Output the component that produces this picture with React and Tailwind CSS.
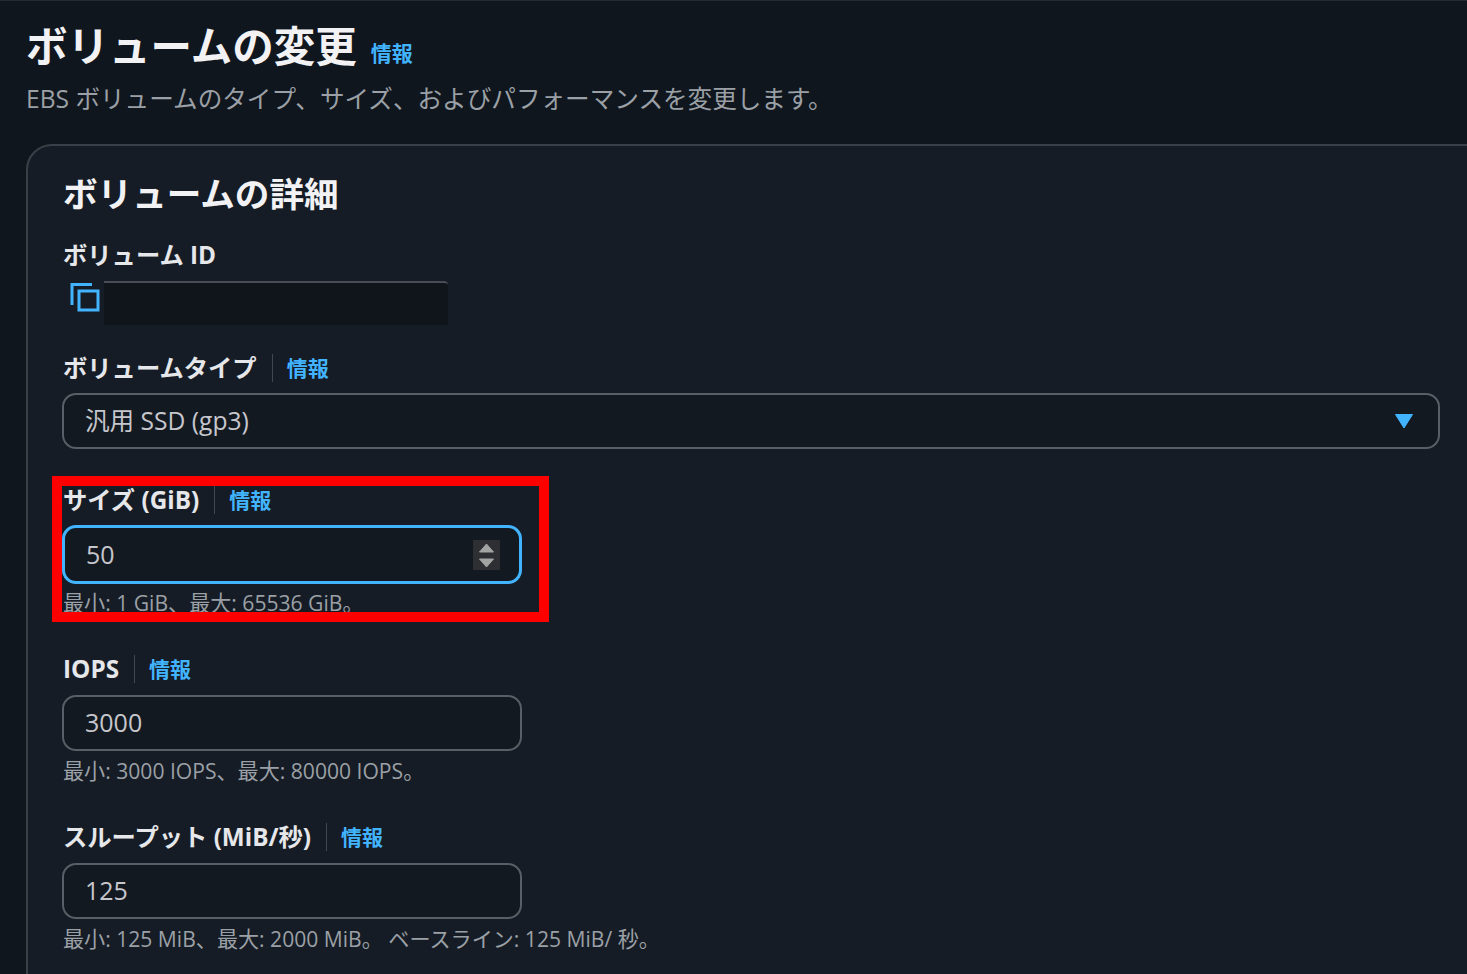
import React from "react";

const font = { fontFamily: '"Open Sans", "Noto Sans CJK JP", sans-serif' };

const Info = () => (
  <a className="text-[21px] leading-[28px] font-bold text-[#42b4ff]">情報</a>
);

// label with a divider and info link
const Label = ({ children, mt }) => (
  <div className={`flex items-center h-[30px] ${mt}`}>
    <span className="text-[24.3px] leading-[30px] font-bold text-[#e6e7ea]">{children}</span>
    <span className="w-px h-[28px] bg-[#424650] ml-[15px] mr-[14px]" />
    <Info />
  </div>
);

const Hint = ({ children, className = "" }) => (
  <div className={`text-[21.1px] leading-[28px] text-[#9ba0a6] ${className}`}>{children}</div>
);

const NumberBox = ({ value, focused, children }) => (
  <div
    className={`flex items-center justify-between w-[460px] pl-[21px] pr-[20px] rounded-[14px] bg-[#131920] text-[25px] text-[#c6c6cd] ${
      focused
        ? "h-[59px] mt-[10px] -ml-px border-[3px] border-[#42b4ff]"
        : "h-[56px] mt-[11px] -ml-px border-2 border-[#5a5e66]"
    }`}
  >
    <span>{value}</span>
    {children}
  </div>
);

const App = () => {
  return (
    <div className="relative w-[1467px] h-[974px] overflow-hidden bg-[#10161e] border-t border-[#232a33]" style={font}>
      <div className="pl-[26px] pt-[20px]">
        <div className="flex items-end h-[50px]">
          <h1 className="text-[41.5px] leading-[50px] font-bold text-[#f2f2f4]">ボリュームの変更</h1>
          <span className="ml-[14px] -translate-y-[4px]">
            <Info />
          </span>
        </div>
        <p className="mt-[12px] text-[24.6px] leading-[32px] text-[#9ba0a6]">
          EBS ボリュームのタイプ、サイズ、およびパフォーマンスを変更します。
        </p>

        <div className="mt-[29px] w-[1500px] h-[900px] pl-[35px] pt-[24px] bg-[#151c25] border-2 border-[#3a3f48] rounded-[26px]">
          <h2 className="text-[34.6px] leading-[48px] font-bold text-[#f2f2f4]">ボリュームの詳細</h2>

          <div className="mt-[22px] text-[24.3px] leading-[30px] font-bold text-[#e6e7ea]">ボリューム ID</div>
          <div className="flex items-start mt-[11px] h-[44px]">
            <svg width="32" height="32" viewBox="0 0 32 32" fill="none" stroke="#42b4ff" strokeWidth="3" className="ml-[7px] shrink-0">
              <path d="M2 24V3.5H22" />
              <rect x="9" y="10" width="19" height="19" />
            </svg>
            <div className="ml-[2px] w-[344px] h-[44px] bg-[#10151b] border-t-2 border-[#4a4d55] rounded-tr-[4px]" />
          </div>

          <Label mt="mt-[28px]">ボリュームタイプ</Label>
          <div className="flex items-center justify-between w-[1378px] h-[56px] mt-[10px] -ml-px pl-[21px] pr-[24px] rounded-[14px] bg-[#131920] border-2 border-[#5a5e66] text-[24.6px] text-[#c6c6cd]">
            <span>汎用 SSD (gp3)</span>
            <svg width="20" height="16" viewBox="0 0 20 16" fill="#42b4ff">
              <path d="M1.5 1.5h17L10 15z" stroke="#42b4ff" strokeLinejoin="round" />
            </svg>
          </div>

          <Label mt="mt-[36px]">サイズ (GiB)</Label>
          <NumberBox value="50" focused>
            <svg width="27" height="30" viewBox="0 0 27 30" className="mr-[-1px]">
              <rect width="27" height="30" fill="#2d2f33" />
              <path d="M13.5 4l7 8H6.500zM13.500 27l-7-8h14z" fill="#a3a3a3" stroke="#a3a3a3" strokeLinejoin="round" />
            </svg>
          </NumberBox>
          <Hint className="mt-[5px]">最小: 1 GiB、最大: 65536 GiB。</Hint>

          <Label mt="mt-[37px]">IOPS</Label>
          <NumberBox value="3000" />
          <Hint className="mt-[6px]">最小: 3000 IOPS、最大: 80000 IOPS。</Hint>

          <Label mt="mt-[37px]">スループット (MiB/秒)</Label>
          <NumberBox value="125" />
          <Hint className="mt-[6px]">最小: 125 MiB、最大: 2000 MiB。 ベースライン: 125 MiB/ 秒。</Hint>
        </div>
      </div>

      {/* red annotation box drawn over the size field */}
      <div className="absolute left-[52px] top-[475px] w-[497px] h-[146px] border-[10px] border-[#ff0000]" />
    </div>
  );
};

export default App;
